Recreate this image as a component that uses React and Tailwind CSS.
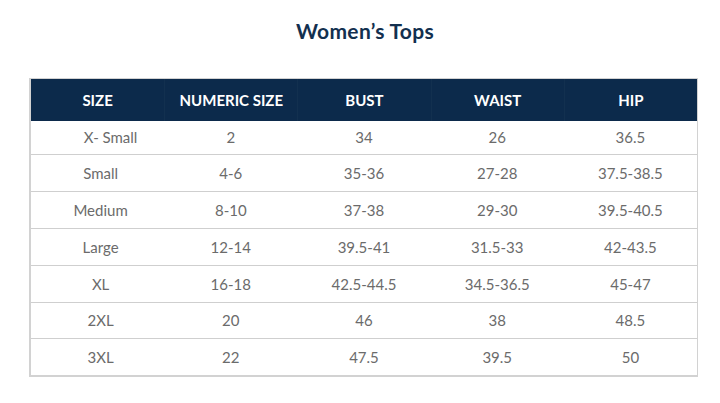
const headers = ['SIZE', 'NUMERIC SIZE', 'BUST', 'WAIST', 'HIP'];

const rows = [
  { size: 'X- Small', numeric: '2', bust: '34', waist: '26', hip: '36.5', h: 'h-[33px]' },
  { size: 'Small', numeric: '4-6', bust: '35-36', waist: '27-28', hip: '37.5-38.5', h: 'h-[37px]' },
  { size: 'Medium', numeric: '8-10', bust: '37-38', waist: '29-30', hip: '39.5-40.5', h: 'h-[37px]' },
  { size: 'Large', numeric: '12-14', bust: '39.5-41', waist: '31.5-33', hip: '42-43.5', h: 'h-[37px]' },
  { size: 'XL', numeric: '16-18', bust: '42.5-44.5', waist: '34.5-36.5', hip: '45-47', h: 'h-[37px]' },
  { size: '2XL', numeric: '20', bust: '46', waist: '38', hip: '48.5', h: 'h-[36px]' },
  { size: '3XL', numeric: '22', bust: '47.5', waist: '39.5', hip: '50', h: 'h-[37px]' },
];

export default function App() {
  return (
    <div className="w-[720px] h-[403px] bg-white overflow-hidden" style={{ fontFamily: 'Lato, "Open Sans", sans-serif' }}>
      <h1 className="pt-[16px] pl-[10px] text-center text-[21px] leading-[29px] font-bold tracking-[0.3px] text-[#13304f]">
        Women’s Tops
      </h1>

      <div className="ml-[29px] mt-[33px] w-[669px] border-t border-l-2 border-r border-b-2 border-[#d2d2d2]">
        <div className="grid grid-cols-5 h-[42px] bg-[#0c2a4b] text-white text-[15px] font-bold">
          {headers.map((h, i) => (
            <div
              key={h}
              className={`flex items-center justify-center ${i > 0 ? 'border-l border-[#12304f]' : ''}`}
            >
              {h}
            </div>
          ))}
        </div>

        {rows.map((r, i) => (
          <div
            key={r.size}
            className={`grid grid-cols-5 ${r.h} text-[15px] text-[#6b6b6b] ${i > 0 ? 'border-t border-[#cfcfcf]' : ''}`}
          >
            <div className={`flex items-center justify-center ${i === 0 ? 'pl-[26px]' : 'pl-[6px]'}`}>{r.size}</div>
            <div className="flex items-center justify-center">{r.numeric}</div>
            <div className="flex items-center justify-center">{r.bust}</div>
            <div className="flex items-center justify-center">{r.waist}</div>
            <div className="flex items-center justify-center">{r.hip}</div>
          </div>
        ))}
      </div>
    </div>
  );
}
